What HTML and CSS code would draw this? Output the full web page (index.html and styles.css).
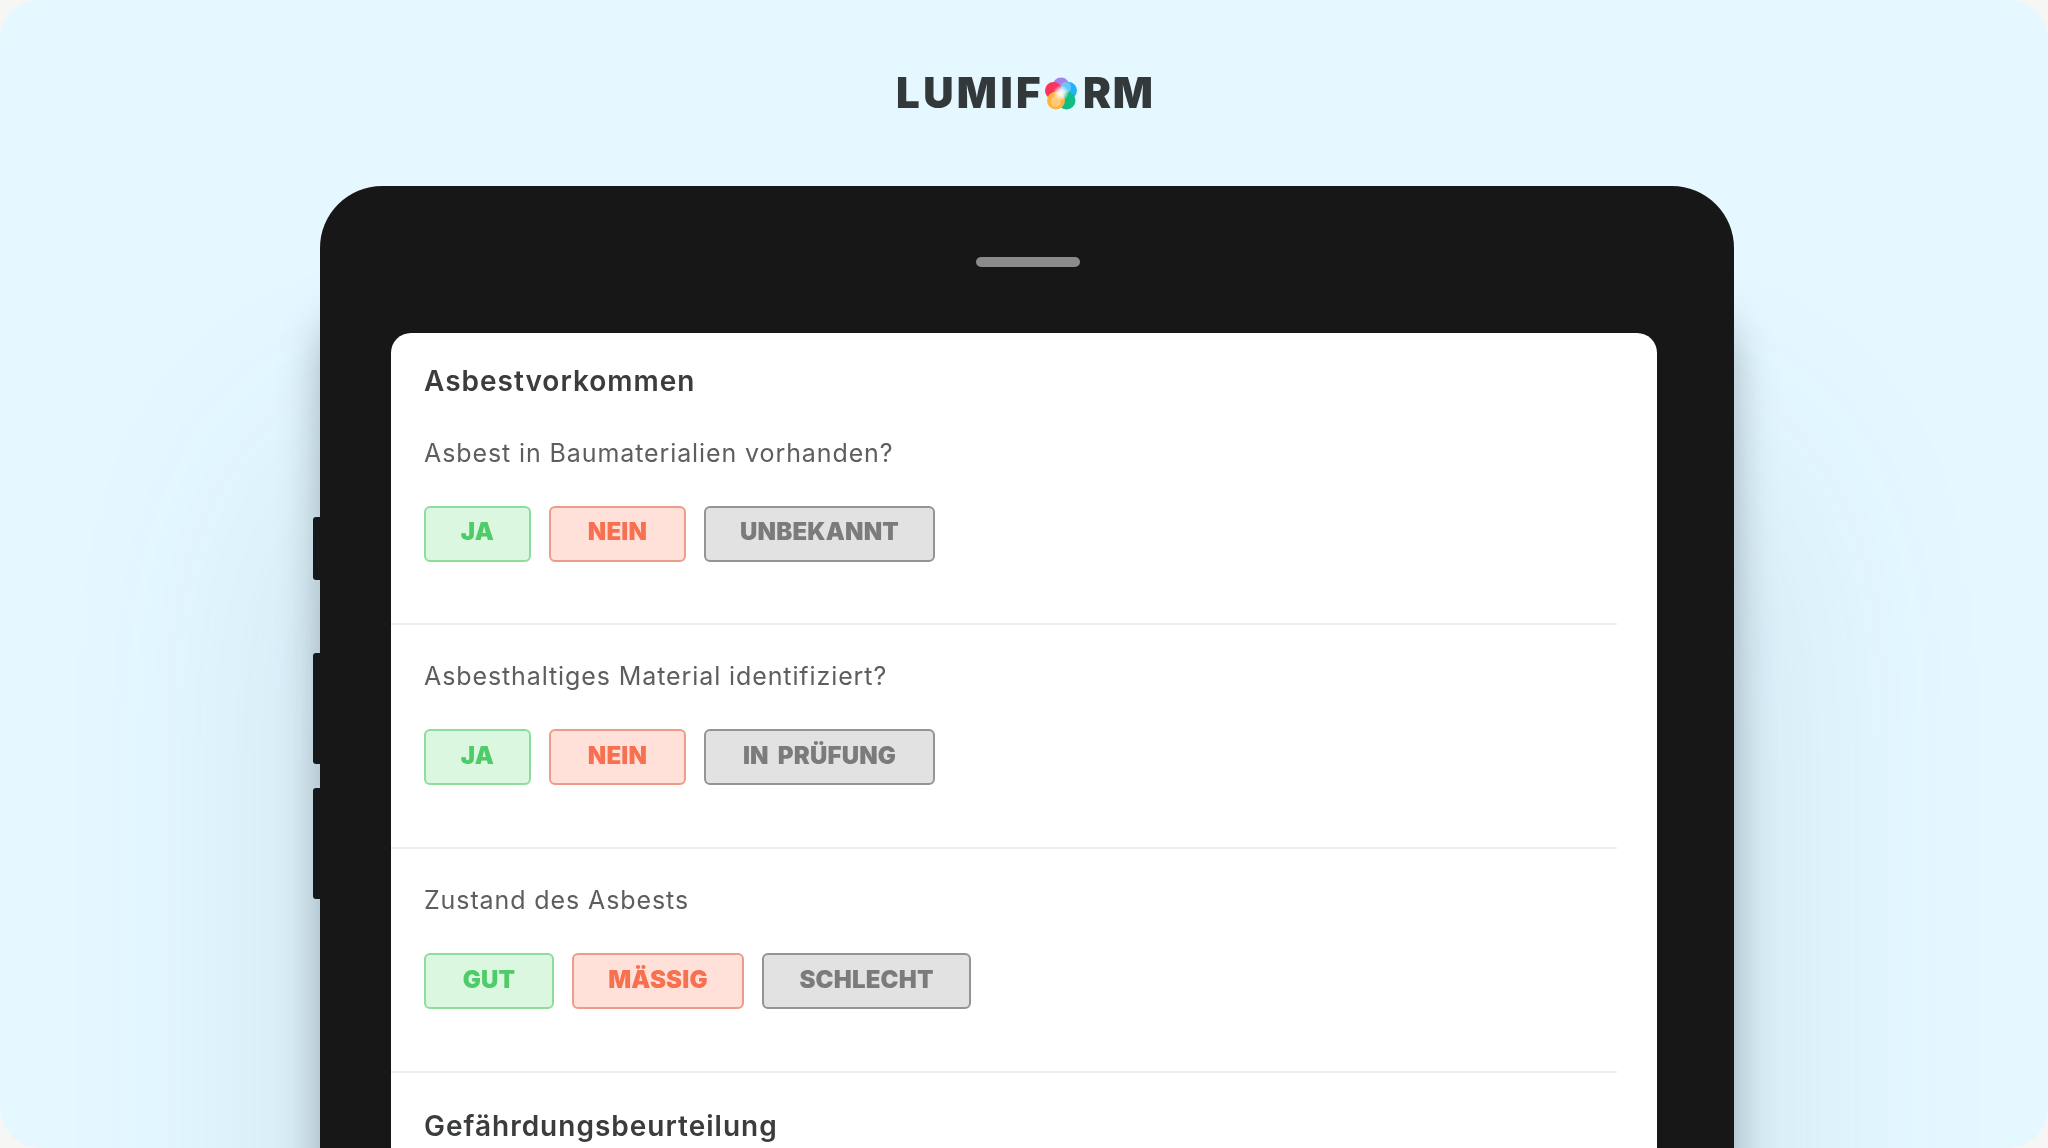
FILE: index.html
```html
<!DOCTYPE html>
<html lang="de">
<head>
<meta charset="utf-8">
<title>Lumiform</title>
<link rel="stylesheet" href="styles.css">
</head>
<body>
<main class="frame">
  <header class="logo">
    <span class="word-a">LUMIF</span>
    <svg class="flower" viewBox="0 0 32 32" aria-hidden="true">
      <defs>
        <radialGradient id="core">
          <stop offset="0" stop-color="#fff"/>
          <stop offset=".4" stop-color="#fff" stop-opacity=".8"/>
          <stop offset="1" stop-color="#fff" stop-opacity="0"/>
        </radialGradient>
      </defs>
      <circle class="p1" cx="16" cy="8.5" r="8.5"/>
      <circle class="p5" cx="8.5" cy="13" r="8.5"/>
      <circle class="p2" cx="23.5" cy="13" r="8.5"/>
      <circle class="p3" cx="21.5" cy="23" r="9"/>
      <circle class="p4" cx="11" cy="23" r="9"/>
      <ellipse class="tint" cx="21" cy="10" rx="5" ry="5.5"/>
      <ellipse class="tint" cx="11" cy="24" rx="5" ry="5.5"/>
      <circle fill="url(#core)" cx="16" cy="15.5" r="8"/>
    </svg>
    <span class="word-b">RM</span>
  </header>
  <section class="device">
    <i class="side side-a"></i>
    <i class="side side-b"></i>
    <i class="side side-c"></i>
    <div class="handle"></div>
    <div class="screen">
      <div class="group first">
        <h2 class="title">Asbestvorkommen</h2>
        <p class="question">Asbest in Baumaterialien vorhanden?</p>
        <div class="choices">
          <span class="chip yes w-a">JA</span>
          <span class="chip no w-b">NEIN</span>
          <span class="chip na w-c">UNBEKANNT</span>
        </div>
      </div>
      <div class="group">
        <p class="question">Asbesthaltiges Material identifiziert?</p>
        <div class="choices">
          <span class="chip yes w-a">JA</span>
          <span class="chip no w-b">NEIN</span>
          <span class="chip na w-c">IN PRÜFUNG</span>
        </div>
      </div>
      <div class="group">
        <p class="question">Zustand des Asbests</p>
        <div class="choices">
          <span class="chip yes w-d">GUT</span>
          <span class="chip no w-e">MÄSSIG</span>
          <span class="chip na w-f">SCHLECHT</span>
        </div>
      </div>
      <h2 class="title next">Gefährdungsbeurteilung</h2>
    </div>
  </section>
</main>
</body>
</html>
```
FILE: styles.css
```css
* { box-sizing: border-box; }
html, body { margin: 0; height: 100%; }
body { background: #f6f6f4; overflow: hidden; font-family: Inter, "Liberation Sans", sans-serif; }
.frame {
  height: 1148px;
  background: #e5f8ff;
  border-radius: 40px;
  overflow: hidden;
  padding-top: 72px;
}
.logo {
  display: flex;
  align-items: center;
  height: 42px;
  padding-left: 896px;
  font-size: 42px;
  font-weight: 900;
  color: #33383b;
  line-height: 42px;
  filter: blur(.5px);
}
.word-a { letter-spacing: 3.4px; }
.word-b { letter-spacing: 1.8px; }
.flower { width: 32px; height: 33px; margin: 0 6px 0 1px; flex: none; }
.p1 { fill: #a583ea; } .p2 { fill: #22b2f8; } .p3 { fill: #10bd82; } .p4 { fill: #ffb23e; } .p5 { fill: #f8345f; }
.tint { fill: #fff; opacity: .3; }
.device {
  position: relative;
  width: 1414px;
  height: 1100px;
  margin: 72px 0 0 320px;
  padding-top: 71px;
  background: #171717;
  border-radius: 62px;
  box-shadow: 0 120px 40px 0 rgba(50, 65, 75, .36), 0 300px 240px 20px rgba(60, 100, 130, .15);
}
.side { position: absolute; left: -7px; width: 8px; background: #14181a; border-radius: 3px 0 0 3px; }
.side-a { top: 331px; height: 63px; }
.side-b { top: 467px; height: 111px; }
.side-c { top: 602px; height: 111px; }
.handle { width: 104px; height: 10px; margin: 0 0 0 656px; border-radius: 5px; background: #8b8b8b; }
.screen {
  width: 1266px;
  height: 900px;
  margin: 66px 0 0 71px;
  background: #fff;
  border-radius: 20px 20px 0 0;
}
.group {
  width: 1226px;
  height: 224px;
  padding: 35px 0 0 33px;
  border-bottom: 2px solid #eeeeee;
}
.group.first { height: 292px; padding-top: 31px; }
.title { margin: 0; font-size: 28px; line-height: 34px; font-weight: 600; color: #3a3c3e; letter-spacing: 1px; filter: blur(.4px); }
.title.next { margin: 36px 0 0 33px; }
.question { margin: 0; font-size: 25px; line-height: 32px; font-weight: 400; color: #5c5e60; letter-spacing: .9px; filter: blur(.4px); }
.title + .question { margin-top: 39px; }
.choices { display: flex; gap: 18px; margin-top: 37px; }
.chip {
  display: flex;
  align-items: center;
  justify-content: center;
  height: 56px;
  padding-bottom: 3px;
  border: 2px solid;
  border-radius: 6px;
  font-size: 24px;
  font-weight: 900;
  letter-spacing: .2px;
  word-spacing: 4px;
  filter: blur(.3px);
}
.first .chip { padding-bottom: 5px; }
.yes { background: #dcf7e0; border-color: #8fdc9f; color: #4fcb69; }
.no { background: #ffe1da; border-color: #ec9c88; color: #f7704f; }
.na { background: #e2e2e2; border-color: #949494; color: #7b7b7b; }
.w-a { width: 107px; } .w-b { width: 137px; } .w-c { width: 231px; }
.w-d { width: 130px; } .w-e { width: 172px; } .w-f { width: 209px; }
```
